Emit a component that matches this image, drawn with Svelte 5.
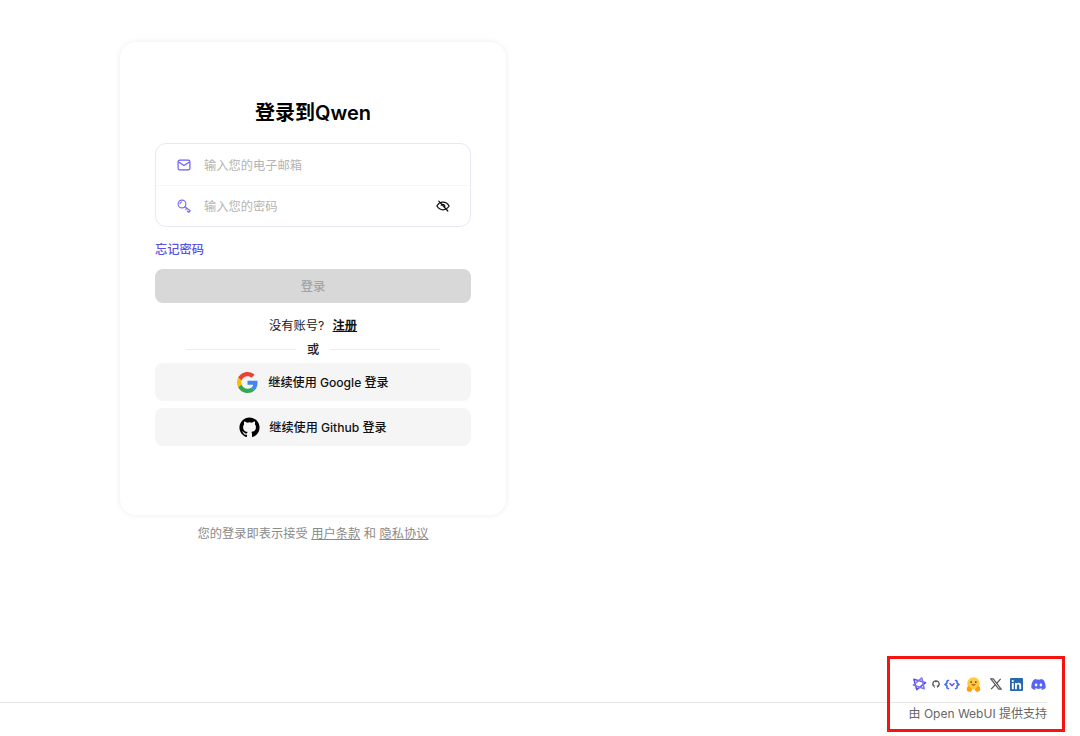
<script>
  const fields = [
    { name: 'email', hint: '输入您的电子邮箱' },
    { name: 'password', hint: '输入您的密码' }
  ];
  const octocat = 'M12 .5C5.650.5.500 5.650.500 12c0 5.080 3.290 9.390 7.860 10.910.58.110.79-.25.790-.55v-2.140c-3.200.70-3.870-1.360-3.870-1.360-.52-1.330-1.280-1.680-1.280-1.680-1.050-.72.080-.70.080-.70 1.160.08 1.770 1.190 1.770 1.190 1.030 1.760 2.700 1.250 3.360.96.100-.75.400-1.250.73-1.540-2.550-.29-5.240-1.280-5.240-5.690 0-1.260.45-2.280 1.180-3.090-.12-.29-.51-1.460.11-3.050 0 0 .97-.31 3.160 1.180a11 11 0 0 1 5.760 0c2.190-1.490 3.160-1.180 3.160-1.180.62 1.590.23 2.760.11 3.050.74.810 1.180 1.830 1.180 3.090 0 4.420-2.690 5.390-5.250 5.680.41.360.78 1.060.78 2.130v3.160c0 .31.210.67.800.55C20.220 21.380 23.500 17.080 23.500 12 23.500 5.650 18.350.5 12 .5z';
</script>

<div class="page">
  <main class="main">
    <section class="card">
      <h1>登录到Qwen</h1>

      <div class="fields">
        {#each fields as field}
          <div class="field">
            {#if field.name === 'email'}
              <svg class="lead" viewBox="0 0 14 14" fill="none" stroke="#6a5cf5" stroke-width="1.2" stroke-linejoin="round">
                <rect x="1.100" y="2.200" width="11.800" height="9.600" rx="1.600" />
                <path d="M1.600 4 7 7.600 12.400 4" />
              </svg>
            {:else}
              <svg class="lead key" viewBox="0 0 14 14" fill="none" stroke="#7468f5" stroke-width="1.100" stroke-linejoin="round" stroke-linecap="round">
                <circle cx="5" cy="5" r="3.900" />
                <path d="M7.900 7.700 13.200 11.800 11.800 13.400 10.200 12 M9.800 9.300 8.700 10.500" />
                <path d="M3 4.600A2 2 0 0 1 4.600 3" />
              </svg>
            {/if}
            <span class="hint">{field.hint}</span>
            {#if field.name === 'password'}
              <svg class="eye" viewBox="0 0 14 14" fill="none" stroke="#111" stroke-width="1.250" stroke-linecap="round">
                <path d="M.9 7c1.500-2.500 3.600-3.800 6.100-3.800s4.600 1.300 6.100 3.800c-1.500 2.500-3.600 3.800-6.100 3.800S2.400 9.500.9 7z" />
                <path d="M5.300 6.200A2 2 0 0 1 8.800 7.800" />
                <path d="M2.800 2.200 11.800 12" />
              </svg>
            {/if}
          </div>
        {/each}
      </div>

      <a class="forgot" href="#forgot">忘记密码</a>
      <button class="submit" type="button">登录</button>

      <p class="signup">没有账号? <a href="#signup">注册</a></p>

      <div class="divider"><span>或</span></div>

      <button class="oauth" type="button">
        <svg class="google" viewBox="0 0 48 48">
          <path fill="#EA4335" d="M24 9.500c3.540 0 6.710 1.220 9.210 3.600l6.850-6.850C35.900 2.380 30.470 0 24 0 14.620 0 6.510 5.380 2.560 13.220l7.980 6.190C12.430 13.720 17.740 9.500 24 9.500z" />
          <path fill="#4285F4" d="M46.980 24.550c0-1.570-.15-3.090-.38-4.550H24v9.020h12.940c-.58 2.960-2.260 5.480-4.780 7.180l7.730 6c4.510-4.180 7.090-10.360 7.090-17.650z" />
          <path fill="#FBBC05" d="M10.530 28.590c-.48-1.450-.76-2.990-.76-4.590s.27-3.140.76-4.590l-7.980-6.190C.92 16.460 0 20.120 0 24c0 3.880.92 7.540 2.560 10.780l7.970-6.190z" />
          <path fill="#34A853" d="M24 48c6.480 0 11.930-2.130 15.890-5.810l-7.730-6c-2.150 1.450-4.920 2.300-8.160 2.300-6.260 0-11.570-4.220-13.470-9.910l-7.980 6.190C6.510 42.620 14.620 48 24 48z" />
        </svg>
        <span>继续使用 Google 登录</span>
      </button>

      <button class="oauth github" type="button">
        <svg class="octocat" viewBox="0 0 24 24" fill="#000">
          <path d={octocat} />
        </svg>
        <span>继续使用 Github 登录</span>
      </button>
    </section>

    <p class="terms">您的登录即表示接受 <a href="#terms">用户条款</a> 和 <a href="#privacy">隐私协议</a></p>
  </main>

  <footer class="footer">
    <div class="socials">
      <svg class="ic star" viewBox="0 0 16 16" fill="none" stroke-width="1.600" stroke-linejoin="round">
        <path d="M2 2.500 14.500 6 5 13.500z" stroke="#5a4ee6" />
        <path d="M10.500 1 13 12.500 1.500 8.500z" stroke="#8277f2" />
      </svg>
      <svg class="ic mini" viewBox="0 0 24 24" fill="#555">
        <path d={octocat} />
      </svg>
      <svg class="ic code" viewBox="0 0 18 12" fill="none" stroke-width="1.800" stroke-linecap="round" stroke-linejoin="round">
        <path d="M5 1.300 3.300 2.300v2.200L1.200 6l2.100 1.500v2.200L5 10.700" stroke="#3a6cf2" />
        <path d="M13 1.300l1.700 1v2.200L16.800 6l-2.100 1.500v2.200L13 10.700" stroke="#3a6cf2" />
        <path d="M6.800 5 9 7.400 11.200 5" stroke="#7f5cf3" />
      </svg>
      <svg class="ic hug" viewBox="0 0 16 16">
        <circle cx="8" cy="6.800" r="6.600" fill="#ffc93f" />
        <path d="M.8 13.200c0-2.400 1.100-3.800 2.500-3.500l3.500 3.900-1.600 2.100C3 16 .8 15.300.8 13.200zM15.200 13.200c0-2.400-1.100-3.800-2.500-3.500l-3.500 3.900 1.600 2.100c2.200.3 4.400-.4 4.400-2.500z" fill="#ff9d0b" />
        <circle cx="5.500" cy="5.400" r=".9" fill="#3a3b45" />
        <circle cx="10.500" cy="5.400" r=".9" fill="#3a3b45" />
        <path d="M5.400 7.800c.9 1.900 4.300 1.900 5.200 0z" fill="#a0552f" />
      </svg>
      <svg class="ic ex" viewBox="0 0 14 14" fill="none">
        <path d="M1 1h2.800L13 13h-2.800z" stroke="#555" stroke-width="1.300" />
        <path d="M12.400 1 7.800 6.200M6 8 1.300 13" stroke="#555" stroke-width="1.500" />
      </svg>
      <svg class="ic linkedin" viewBox="0 0 14 14">
        <rect width="14" height="14" rx="1" fill="#2867b2" />
        <rect x="2" y="5.400" width="2" height="6.600" fill="#fff" />
        <circle cx="3" cy="3.200" r="1.150" fill="#fff" />
        <path d="M5.400 5.400h1.900v.9c.4-.7 1.200-1.100 2.100-1.100 1.900 0 2.600 1.200 2.600 3V12H10V8.600c0-.9-.3-1.600-1.200-1.600S7.400 7.700 7.400 8.600V12h-2z" fill="#fff" />
      </svg>
      <svg class="ic discord" viewBox="0 0 16 12">
        <path fill="#5865f2" d="M13.500 1A13 13 0 0 0 10.300 0l-.4.800a12 12 0 0 0-3.800 0L5.700 0a13 13 0 0 0-3.200 1C.5 4 0 6.900.2 9.800A13 13 0 0 0 4.200 12l.8-1.300-1.200-.6.300-.2a9.300 9.300 0 0 0 7.800 0l.3.200-1.200.6.800 1.300a13 13 0 0 0 4-2.200c.3-3.400-.6-6.200-2.300-8.800zM5.400 8.100c-.8 0-1.400-.7-1.400-1.600S4.600 4.900 5.400 4.900s1.400.7 1.400 1.600-.6 1.600-1.400 1.600zm5.200 0c-.8 0-1.400-.7-1.400-1.600s.6-1.600 1.400-1.600 1.400.7 1.400 1.600-.6 1.600-1.400 1.600z" />
      </svg>
    </div>
    <div class="rule"></div>
    <p class="powered">由 Open WebUI 提供支持</p>
  </footer>

  <!-- annotation drawn on top of the screenshot -->
  <div class="callout"></div>
</div>

<style>
  :global(body) {
    background: #fff;
  }

  .page {
    position: relative;
    display: flex;
    flex-direction: column;
    justify-content: space-between;
    width: 1080px;
    height: 736px;
    overflow: hidden;
    font-family: Inter, "Noto Sans CJK SC", sans-serif;
    color: #000;
  }

  .main {
    display: flex;
    flex-direction: column;
    width: 386px;
    margin: 42px 0 0 120px;
  }

  .card {
    display: flex;
    flex-direction: column;
    box-sizing: border-box;
    height: 473px;
    padding: 57px 35px 0;
    border-radius: 16px;
    background: #fff;
    box-shadow: 0 0 6px rgba(0, 0, 0, 0.08);
  }

  h1 {
    margin: 0 0 15px;
    font-size: 20px;
    line-height: 29px;
    font-weight: 600;
    text-align: center;
  }

  .fields {
    box-sizing: border-box;
    height: 84px;
    border: 1px solid #e6e8f8;
    border-radius: 11px;
  }

  .field {
    display: flex;
    align-items: center;
    box-sizing: border-box;
    height: 41px;
    padding: 0 21px;
  }

  .field + .field {
    padding-bottom: 1px;
    border-top: 1px solid #f7f7fb;
  }

  .lead {
    flex: none;
    width: 14px;
    height: 14px;
    margin-right: 13px;
  }

  .hint {
    flex: 1;
    font-size: 12.250px;
    color: #b4b4b4;
  }

  .eye {
    width: 14px;
    height: 14px;
    margin-right: -1px;
  }

  .forgot {
    margin-top: 14px;
    font-size: 12.250px;
    line-height: 18px;
    font-weight: 500;
    color: #5b50ea;
    text-decoration: none;
  }

  .submit {
    height: 34px;
    margin-top: 10px;
    padding: 0 0 1px;
    border: 0;
    border-radius: 8px;
    background: #d8d8d8;
    font: inherit;
    font-size: 12.250px;
    font-weight: 500;
    color: #a3a3a3;
  }

  .signup {
    margin: 14px 0 0;
    font-size: 12.250px;
    line-height: 18px;
    text-align: center;
    color: #222;
  }

  .signup a {
    margin-left: 5px;
    font-weight: 600;
    color: #111;
    text-decoration: underline;
  }

  .divider {
    display: flex;
    align-items: center;
    gap: 11px;
    margin: 6px 31px 4px;
    font-size: 12.250px;
    line-height: 18px;
    font-weight: 500;
    color: #222;
  }

  .divider::before,
  .divider::after {
    content: "";
    flex: 1;
    height: 1px;
    margin-bottom: 2px;
    background: #eeeeee;
  }

  .oauth {
    display: flex;
    align-items: center;
    justify-content: center;
    height: 38px;
    padding: 0;
    border: 0;
    border-radius: 8px;
    background: #f5f5f5;
    font: inherit;
    font-size: 12.100px;
    font-weight: 500;
    color: #111;
  }

  .oauth span {
    position: relative;
    top: -1px;
  }

  .github {
    margin-top: 7px;
  }

  .google {
    width: 21px;
    height: 21px;
    margin-right: 10px;
  }

  .octocat {
    width: 21px;
    height: 21px;
    margin-right: 9px;
  }

  .terms {
    margin: 10px 0 0;
    font-size: 12.250px;
    line-height: 18px;
    text-align: center;
    color: #8a8a8a;
  }

  .terms a {
    color: #8a8a8a;
    text-decoration: underline;
  }

  .footer {
    display: flex;
    flex-direction: column;
    align-items: flex-end;
    width: 1047px;
    margin-bottom: 13px;
  }

  .socials {
    display: flex;
    align-items: center;
    gap: 6px;
    height: 18px;
    margin-right: 1px;
    margin-bottom: 9px;
  }

  .ic {
    display: block;
  }

  .star {
    width: 15px;
    height: 15px;
  }

  .mini {
    width: 8px;
    height: 8px;
    margin-left: -1px;
  }

  .code {
    width: 16px;
    height: 11px;
    margin-left: -2px;
  }

  .hug {
    width: 15px;
    height: 15px;
  }

  .ex {
    width: 12px;
    height: 12px;
    margin-left: 3px;
  }

  .linkedin {
    width: 13px;
    height: 13px;
    margin-left: 2px;
  }

  .discord {
    width: 15px;
    height: 11px;
    margin-left: 2px;
  }

  .rule {
    align-self: stretch;
    height: 1px;
    background: #e6e6e6;
  }

  .powered {
    margin: 2px 0 0 0;
    font-size: 12px;
    line-height: 18px;
    color: #666;
  }

  .callout {
    position: absolute;
    left: 887px;
    top: 656px;
    width: 178px;
    height: 76px;
    box-sizing: border-box;
    border: 3px solid #f5140f;
  }
</style>
